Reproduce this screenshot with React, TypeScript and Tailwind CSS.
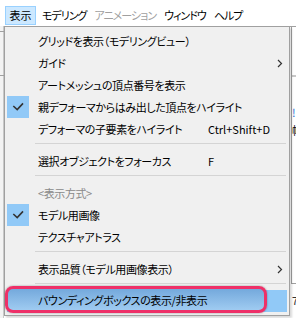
import React from "react";

const FONT = "[font-family:'Noto_Sans_CJK_JP','Noto_Sans',sans-serif] [font-feature-settings:'palt']";

function Check() {
  return (
    <div className="w-[22px] h-[22px] bg-[#91c9f7] flex items-center justify-center">
      <svg width="22" height="22" viewBox="0 0 22 22">
        <path d="M6.3 10 L10.2 13.6 L16 7.4" fill="none" stroke="#333" strokeWidth="1.6" />
      </svg>
    </div>
  );
}

function Arrow() {
  return (
    <svg width="6" height="9" viewBox="0 0 6 9" className="mr-[4px]">
      <path d="M1 1 L4.5 4.5 L1 8" fill="none" stroke="#333" strokeWidth="1.2" />
    </svg>
  );
}

type Row = {
  label: string;
  check?: boolean;
  shortcut?: string;
  sub?: boolean;
  disabled?: boolean;
  hl?: boolean;
};

function Item({ label, check, shortcut, sub, disabled, hl }: Row) {
  return (
    <div className={`h-[22px] flex items-center ${hl ? "bg-[#91c9f7]" : ""}`}>
      <div className="w-[22px] h-[22px] shrink-0">{check ? <Check /> : null}</div>
      <div
        className={`ml-[9px] w-[170px] shrink-0 whitespace-nowrap text-[11px] tracking-[-0.4px] leading-[22px] ${
          disabled ? "text-[#8a8a8a]" : "text-black"
        }`}
      >
        {label}
      </div>
      <div className="flex-1 text-[11px] leading-[22px] text-black whitespace-nowrap">{shortcut}</div>
      {sub ? <Arrow /> : null}
    </div>
  );
}

function Sep() {
  return (
    <div className="h-[10px] pt-[3px] pl-[28px] pr-[1px]">
      <div className="h-px bg-[#d4d4d4]" />
    </div>
  );
}

export default function App() {
  return (
    <div className={`relative w-[296px] h-[318px] bg-white overflow-hidden ${FONT}`}>
      {/* background app fragments */}
      <div className="absolute left-0 top-[26px] w-[4px] h-[292px] bg-[#f3f3f3] border-r border-[#c8c8c8]" />
      <div className="absolute left-0 top-[31px] w-[4px] h-px bg-[#a0a0a0]" />
      <div className="absolute left-0 top-[75px] w-[4px] h-px bg-[#a0a0a0]" />
      <div className="absolute left-[290px] top-[26px] w-[6px] h-px bg-[#a0a0a0]" />
      <div className="absolute left-[291px] top-[26px] w-px h-[258px] bg-[#a0a0a0]" />
      <div className="absolute left-[292px] top-[75px] w-[4px] h-[2px] bg-[#c8c8c8]" />
      <div className="absolute left-[292px] top-[105px] text-[11px] leading-[14px] text-[#2a6fd6]">!</div>
      <div className="absolute left-[292px] top-[123px] text-[11px] leading-[14px] text-black">幅</div>
      <div className="absolute left-[291px] top-[283px] w-[5px] h-px bg-[#a0a0a0]" />
      <div className="absolute left-[292px] top-[293px] text-[11px] leading-[14px] text-[#333]">7</div>

      {/* menubar */}
      <div className="h-[26px] flex items-start pt-[6px] pl-[5px] text-[11px] bg-white">
        <div className="w-[31px] h-[19px] flex items-center justify-center bg-[#cce8ff] border border-[#99d1ff] text-black">
          表示
        </div>
        <div className="ml-[6px] h-[19px] flex items-center gap-[8px] tracking-[-1px]">
          <span className="text-black">モデリング</span>
          <span className="text-[#a0a0a0]">アニメーション</span>
          <span className="text-black">ウィンドウ</span>
          <span className="text-black">ヘルプ</span>
        </div>
      </div>

      {/* dropdown menu */}
      <div className="absolute left-[4px] top-[26px] w-[286px] h-[290px] bg-[#f0f0f0] border border-[#a0a0a0] px-[2px] py-[3px] shadow-[2px_2px_2px_rgba(0,0,0,0.15)]">
        <Item label="グリッドを表示（モデリングビュー）" />
        <Item label="ガイド" sub />
        <Item label="アートメッシュの頂点番号を表示" />
        <Item label="親デフォーマからはみ出した頂点をハイライト" check />
        <Item label="デフォーマの子要素をハイライト" shortcut="Ctrl+Shift+D" />
        <Sep />
        <Item label="選択オブジェクトをフォーカス" shortcut="F" />
        <Sep />
        <Item label="<表示方式>" disabled />
        <Item label="モデル用画像" check />
        <Item label="テクスチャアトラス" />
        <Sep />
        <Item label="表示品質（モデル用画像表示）" sub />
        <Sep />
        <Item label="バウンディングボックスの表示/非表示" hl />
      </div>

      {/* annotation frame */}
      <div className="absolute left-[5px] top-[286px] w-[262px] h-[27px] rounded-[8px] border-[3px] border-[#ee3068] bg-gradient-to-b from-[#74a9dc] to-[#9fcbf1] shadow-[0_0_2px_rgba(0,0,0,0.4)] flex items-center">
        <span className="ml-[30px] text-[11px] tracking-[-0.4px] leading-[22px] text-black whitespace-nowrap">
          バウンディングボックスの表示/非表示
        </span>
      </div>
    </div>
  );
}
